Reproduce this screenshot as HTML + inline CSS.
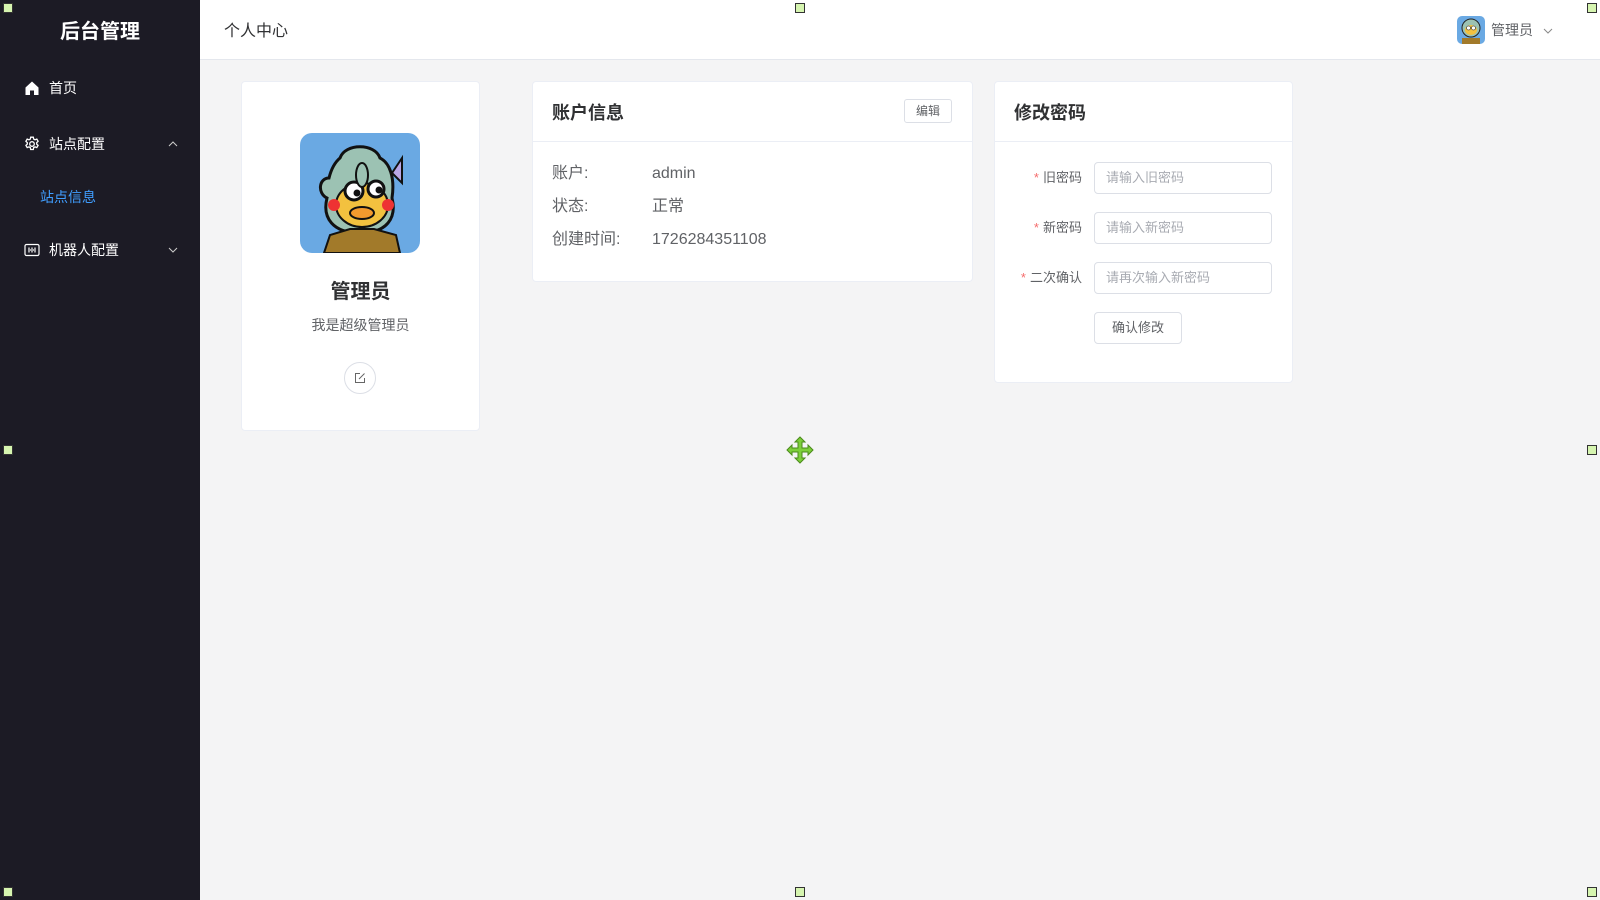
<!DOCTYPE html>
<html><head><meta charset="utf-8"><style>
*{margin:0;padding:0;box-sizing:border-box}
body{width:1600px;height:900px;overflow:hidden;background:#f4f4f5;font-family:"Liberation Sans","Noto Sans CJK SC",sans-serif;position:relative;color:#303133}
.side{position:absolute;left:0;top:0;width:200px;height:900px;background:#1c1b25}
.abs{position:absolute}
.logo{left:0;width:200px;top:18px;text-align:center;color:#fff;font-size:20px;font-weight:bold;line-height:28px}
.mi{color:#fff;font-size:14px;line-height:20px}
.head{position:absolute;left:200px;top:0;right:0;height:60px;background:#fff;border-bottom:1px solid #e4e7ed}
.card{position:absolute;background:#fff;border:1px solid #ebeef5;border-radius:4px}
.lbl{font-size:16px;color:#606266;line-height:22px}
.inp{position:absolute;left:1094px;width:178px;height:32px;border:1px solid #dcdfe6;border-radius:4px;font-size:13px;color:#a8abb2;line-height:30px;padding-left:11px}
.fl{position:absolute;width:100px;left:982px;text-align:right;font-size:13px;color:#606266;line-height:20px}
.fl b{color:#f56c6c;font-weight:normal;margin-right:4px}
.h{position:absolute;width:10px;height:10px;background:#d6f5b0;border:1px solid #333}
</style></head><body>
<div class="side">
<div class="abs logo">后台管理</div>
<svg class="abs" style="left:24px;top:80px" width="16" height="16" viewBox="0 0 16 16"><path d="M8 1.5L1.5 7.5V15H6V10.5H10V15H14.5V7.5Z" fill="#fff"/></svg>
<div class="abs mi" style="left:49px;top:78px">首页</div>
<svg class="abs" style="left:24px;top:136px" width="16" height="16" viewBox="0 0 16 16" fill="none" stroke="#fff" stroke-width="1.3"><path d="M6.7 1.2h2.6l.4 1.9 1.3.7 1.8-.7 1.3 2.2-1.4 1.3v1.5l1.4 1.3-1.3 2.2-1.8-.7-1.3.7-.4 1.9H6.7l-.4-1.9-1.3-.7-1.8.7-1.3-2.2 1.4-1.3V6.6L1.9 5.3l1.3-2.2 1.8.7 1.3-.7z"/><circle cx="8" cy="8" r="2.3"/></svg>
<div class="abs mi" style="left:49px;top:134px">站点配置</div>
<svg class="abs" style="left:168px;top:140px" width="10" height="8" viewBox="0 0 10 8"><path d="M1 6L5 2L9 6" fill="none" stroke="#ccc" stroke-width="1"/></svg>
<div class="abs" style="left:40px;top:187px;font-size:14px;line-height:20px;color:#409eff">站点信息</div>
<svg class="abs" style="left:24px;top:242px" width="16" height="16" viewBox="0 0 16 16" fill="none" stroke="#fff" stroke-width="1.2"><rect x="1" y="2.5" width="14" height="11" rx="1.5"/><path d="M5 5.5v5M8 5.5v5M11 5.5v5M6 8h1M9 8h1"/></svg>
<div class="abs mi" style="left:49px;top:240px">机器人配置</div>
<svg class="abs" style="left:168px;top:246px" width="10" height="8" viewBox="0 0 10 8"><path d="M1 2L5 6L9 2" fill="none" stroke="#ccc" stroke-width="1"/></svg>
</div>
<div class="head"></div>
<div class="abs" style="left:224px;top:21px;font-size:16px;line-height:22px;color:#303133">个人中心</div>
<svg class="abs" style="left:1457px;top:16px" width="28" height="28" viewBox="0 0 28 28"><rect width="28" height="28" rx="5" fill="#6aa9e3"/><ellipse cx="14" cy="12" rx="9" ry="9" fill="#9cc2b3" stroke="#222"/><ellipse cx="14" cy="14" rx="6" ry="5" fill="#f3c13f"/><circle cx="11.5" cy="12" r="2" fill="#fff" stroke="#222" stroke-width=".6"/><circle cx="16.5" cy="12" r="2" fill="#fff" stroke="#222" stroke-width=".6"/><path d="M5 28v-6h18v6z" fill="#a27a2a"/></svg>
<div class="abs" style="left:1491px;top:20px;font-size:14px;line-height:20px;color:#606266">管理员</div>
<svg class="abs" style="left:1543px;top:27px" width="10" height="8" viewBox="0 0 10 8"><path d="M1 2L5 6L9 2" fill="none" stroke="#888" stroke-width="1"/></svg>

<div class="card" style="left:241px;top:81px;width:239px;height:350px"></div>
<svg class="abs" style="left:300px;top:133px" width="120" height="120" viewBox="0 0 120 120"><rect width="120" height="120" rx="12" fill="#6aa9e3"/><path d="M40 25c5-15 35-15 40 0 10 5 15 20 12 40 5 20-5 35-32 35-27 0-38-15-33-35-10-5-8-20 2-20 2-8 5-15 11-20z" fill="#9cc2b3" stroke="#111" stroke-width="3"/><path d="M92 40l10-15 0 25z" fill="#b9a6e6" stroke="#111" stroke-width="2"/><ellipse cx="62" cy="72" rx="26" ry="22" fill="#f3c13f" stroke="#111" stroke-width="2"/><circle cx="34" cy="72" r="6" fill="#e33"/><circle cx="88" cy="72" r="6" fill="#e33"/><circle cx="54" cy="58" r="9" fill="#fff" stroke="#111" stroke-width="3"/><circle cx="76" cy="56" r="8" fill="#fff" stroke="#111" stroke-width="3"/><circle cx="57" cy="60" r="3.5" fill="#111"/><circle cx="79" cy="57" r="3.5" fill="#111"/><ellipse cx="62" cy="80" rx="12" ry="6" fill="#f29a2e" stroke="#111" stroke-width="2"/><ellipse cx="62" cy="42" rx="6" ry="12" fill="#9cc2b3" stroke="#111" stroke-width="2"/><path d="M24 120l6-18 20-6h24l22 6 4 18z" fill="#a27a2a" stroke="#111" stroke-width="2"/></svg>
<div class="abs" style="left:241px;width:239px;top:278px;text-align:center;font-size:20px;font-weight:bold;line-height:28px;color:#303133">管理员</div>
<div class="abs" style="left:241px;width:239px;top:315px;text-align:center;font-size:14px;line-height:20px;color:#606266">我是超级管理员</div>
<div class="abs" style="left:344px;top:362px;width:32px;height:32px;border:1px solid #dcdfe6;border-radius:50%"></div>
<svg class="abs" style="left:354px;top:372px" width="12" height="12" viewBox="0 0 12 12" fill="none" stroke="#666" stroke-width="1"><path d="M6 1.5H1.5v9h9V6M5 7l5.5-5.5"/></svg>

<div class="card" style="left:532px;top:81px;width:441px;height:201px"></div>
<div class="abs" style="left:532px;top:141px;width:441px;height:1px;background:#ebeef5"></div>
<div class="abs" style="left:552px;top:100px;font-size:18px;font-weight:bold;line-height:26px">账户信息</div>
<div class="abs" style="left:904px;top:99px;width:48px;height:24px;border:1px solid #dcdfe6;border-radius:3px;font-size:12px;line-height:22px;text-align:center;color:#606266">编辑</div>
<div class="abs lbl" style="left:552px;top:163px">账户:</div><div class="abs lbl" style="left:652px;top:163px">admin</div>
<div class="abs lbl" style="left:552px;top:196px">状态:</div><div class="abs lbl" style="left:652px;top:196px">正常</div>
<div class="abs lbl" style="left:552px;top:229px">创建时间:</div><div class="abs lbl" style="left:652px;top:229px">1726284351108</div>

<div class="card" style="left:994px;top:81px;width:299px;height:302px"></div>
<div class="abs" style="left:994px;top:141px;width:299px;height:1px;background:#ebeef5"></div>
<div class="abs" style="left:1014px;top:100px;font-size:18px;font-weight:bold;line-height:26px">修改密码</div>
<div class="fl" style="top:168px"><b>*</b>旧密码</div><div class="inp" style="top:162px">请输入旧密码</div>
<div class="fl" style="top:218px"><b>*</b>新密码</div><div class="inp" style="top:212px">请输入新密码</div>
<div class="fl" style="top:268px"><b>*</b>二次确认</div><div class="inp" style="top:262px">请再次输入新密码</div>
<div class="abs" style="left:1094px;top:312px;width:88px;height:32px;border:1px solid #dcdfe6;border-radius:4px;font-size:13px;line-height:30px;text-align:center;color:#606266">确认修改</div>

<div class="h" style="left:3px;top:3px"></div><div class="h" style="left:795px;top:3px"></div><div class="h" style="left:1587px;top:3px"></div>
<div class="h" style="left:3px;top:445px"></div><div class="h" style="left:1587px;top:445px"></div>
<div class="h" style="left:3px;top:887px"></div><div class="h" style="left:795px;top:887px"></div><div class="h" style="left:1587px;top:887px"></div>
<svg class="abs" style="left:786px;top:436px" width="28" height="28" viewBox="0 0 28 28"><path d="M14 1l5 5h-3v6h6V9l5 5-5 5v-3h-6v6h3l-5 5-5-5h3v-6H6v3l-5-5 5-5v3h6V6H9z" fill="#7ccf3a" stroke="#4a8a1a" stroke-width="1"/></svg>
</body></html>
